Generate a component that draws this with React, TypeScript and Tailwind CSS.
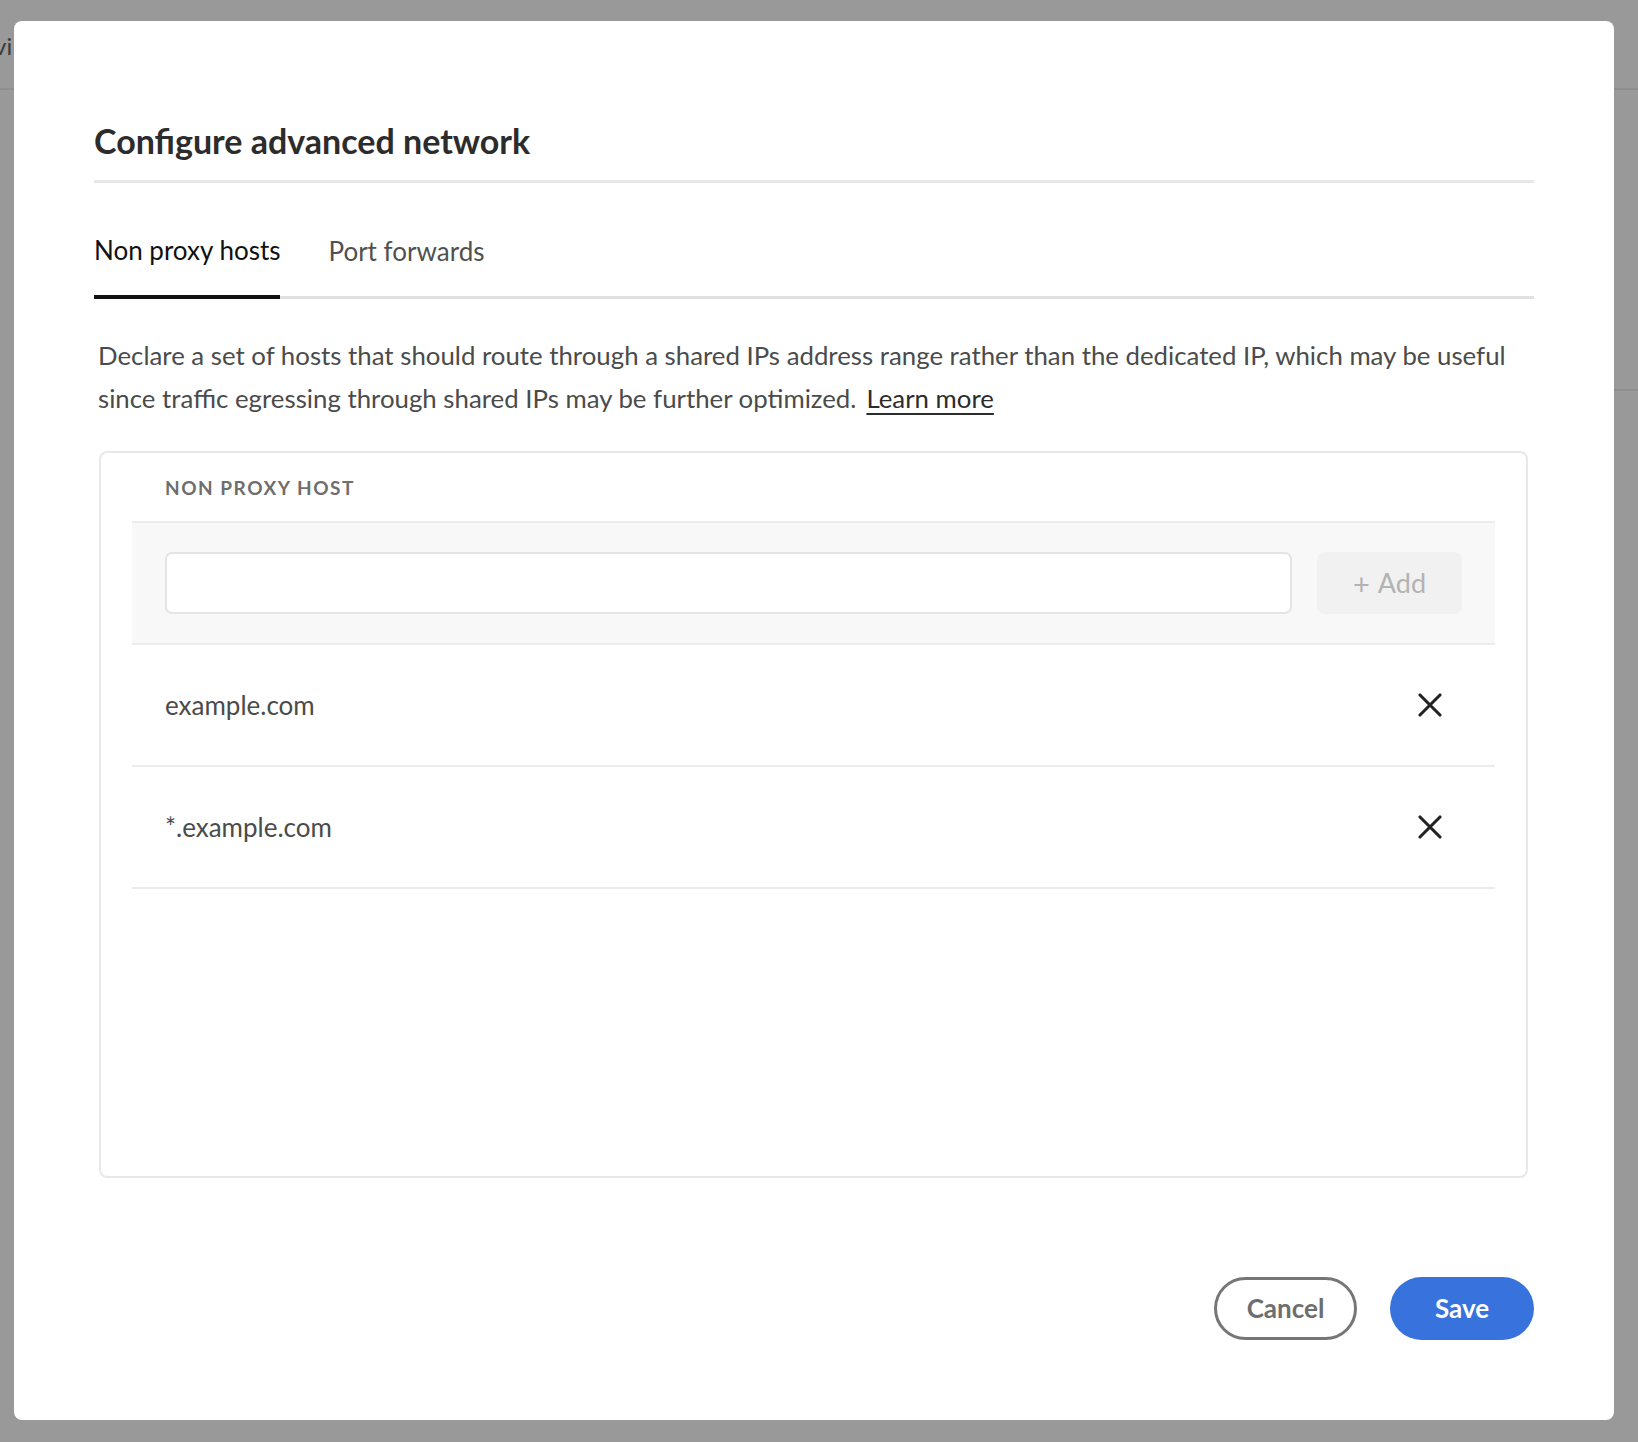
import React from "react";

function XIcon() {
  return (
    <svg width="24" height="24" viewBox="0 0 24 24" fill="none">
      <path d="M2 2 L22 22 M22 2 L2 22" stroke="#222222" strokeWidth="3.1" strokeLinecap="round" />
    </svg>
  );
}

export default function App() {
  const font = { fontFamily: "Lato, 'Noto Sans', sans-serif" };
  return (
    <div className="relative w-[1638px] h-[1442px] overflow-hidden bg-[#999999]" style={font}>
      {/* background page behind overlay */}
      <div className="absolute left-0 top-0 w-full h-[90px] border-b-2 border-[#8e8e8e]">
        <span className="absolute left-[-6px] top-[28px] text-[24px] text-[#3a3a3a]">vi</span>
      </div>
      <div className="absolute right-0 top-[389px] w-[30px] h-[2px] bg-[#8e8e8e]" />

      <div className="relative pt-[21px] pl-[14px]">
        <div className="w-[1600px] h-[1399px] bg-white rounded-[8px] px-[80px] flex flex-col">
          {/* Title */}
          <div className="pt-[100px] pb-[19px] border-b-[3px] border-[#e8e8e8]">
            <h1 className="text-[34px] leading-[40px] font-bold text-[#2c2c2c]">Configure advanced network</h1>
          </div>

          {/* Tabs */}
          <div className="mt-[52px] flex items-end gap-[48px] border-b-[3px] border-[#e1e1e1]">
            <div className="-mb-[3px] pb-[30px] border-b-4 border-[#111111] text-[26px] leading-[30px] text-[#111111]">
              Non proxy hosts
            </div>
            <div className="pb-[30px] text-[26px] leading-[30px] text-[#505050]">Port forwards</div>
          </div>

          {/* Description */}
          <p className="mt-[35px] pl-[4px] text-[25.8px] leading-[43px] text-[#4b4b4b]">
            Declare a set of hosts that should route through a shared IPs address range rather than the dedicated IP, which may be useful since traffic egressing through shared IPs may be further optimized.
            <a className="ml-[10px] underline underline-offset-[5px] decoration-[1.5px] text-[#2c2c2c]" href="#">Learn more</a>
          </p>

          {/* Card */}
          <div className="mt-[31px] ml-[5px] mr-[6px] h-[727px] border-2 border-[#e8e8e8] rounded-[8px] px-[31px]">
            <div className="pt-[23px] pb-[21px] pl-[33px] text-[19px] leading-[24px] font-bold tracking-[0.08em] text-[#6e6e6e]">
              NON PROXY HOST
            </div>
            <div className="border-y-2 border-[#ececec] bg-[#f8f8f8] py-[29px] pl-[33px] pr-[33px] flex gap-[25px]">
              <div className="flex-1 h-[62px] bg-white border-2 border-[#e4e4e4] rounded-[7px]" />
              <div className="w-[145px] h-[62px] bg-[#f1f1f1] rounded-[8px] flex items-center justify-center text-[27px] text-[#b3b3b3]">
                <span className="mr-[8px] text-[29px] leading-none">+</span>Add
              </div>
            </div>
            {["example.com", "*.example.com"].map((h) => (
              <div key={h} className="h-[122px] border-b-2 border-[#ececec] flex items-center justify-between pl-[33px] pr-[53px]">
                <span className="text-[26px] leading-[30px] text-[#4b4b4b]">{h}</span>
                <XIcon />
              </div>
            ))}
          </div>

          {/* Footer */}
          <div className="mt-auto pb-[80px] flex justify-end gap-[33px]">
            <button className="w-[143px] h-[63px] rounded-full border-[3px] border-[#767676] text-[26px] font-bold text-[#6e6e6e]">
              Cancel
            </button>
            <button className="w-[144px] h-[63px] rounded-full bg-[#3772dd] text-[26px] font-bold text-white">
              Save
            </button>
          </div>
        </div>
      </div>
    </div>
  );
}
